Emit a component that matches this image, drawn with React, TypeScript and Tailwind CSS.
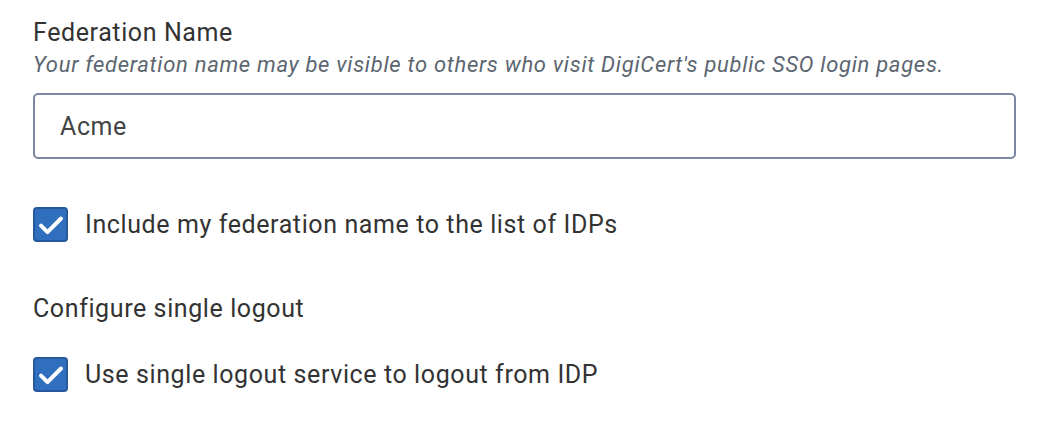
import { useState } from "react";

function Checkbox({ checked, onChange, label }: { checked: boolean; onChange: () => void; label: string }) {
  return (
    <label className="flex items-center gap-[17px] cursor-pointer select-none">
      <span
        onClick={onChange}
        className={`flex h-[35px] w-[35px] items-center justify-center rounded-[4px] border-2 ${
          checked ? "border-[#25599c] bg-[#2f6fbe]" : "border-[#7b88a3] bg-white"
        }`}
      >
        {checked && (
          <svg viewBox="0 0 24 24" className="h-[30px] w-[30px]" fill="none" stroke="white" strokeWidth="3.2" strokeLinecap="round" strokeLinejoin="round">
            <path d="M4 12.5l5.2 5.2L20 6.8" />
          </svg>
        )}
      </span>
      <span className="text-[25px] leading-8 tracking-[0.6px] text-[#333]">{label}</span>
    </label>
  );
}

export default function App() {
  const [name, setName] = useState("Acme");
  const [includeIdp, setIncludeIdp] = useState(true);
  const [singleLogout, setSingleLogout] = useState(true);

  return (
    <div className="min-h-[426px] w-[1044px] bg-white pl-[33px] pr-[28px] pt-[17px] font-['Roboto',sans-serif]">
      {/* Federation name */}
      <div>
        <div className="text-[25px] leading-8 tracking-[0.6px] text-[#333]">Federation Name</div>
        <div className="mt-[2px] text-[22px] italic leading-7 tracking-[0.7px] text-[#5c6670]">
          Your federation name may be visible to others who visit DigiCert's public SSO login pages.
        </div>
        <input
          value={name}
          onChange={(e) => setName(e.target.value)}
          className="mt-[14px] h-[66px] w-full rounded-[5px] border-2 border-[#7b88a3] px-[25px] text-[25px] tracking-[0.6px] text-[#444] outline-none"
        />
      </div>

      <div className="mt-12">
        <Checkbox checked={includeIdp} onChange={() => setIncludeIdp(!includeIdp)} label="Include my federation name to the list of IDPs" />
      </div>

      <div className="mt-[51px] text-[25px] leading-8 tracking-[0.6px] text-[#333]">Configure single logout</div>

      <div className="mt-[32px]">
        <Checkbox checked={singleLogout} onChange={() => setSingleLogout(!singleLogout)} label="Use single logout service to logout from IDP" />
      </div>
    </div>
  );
}
